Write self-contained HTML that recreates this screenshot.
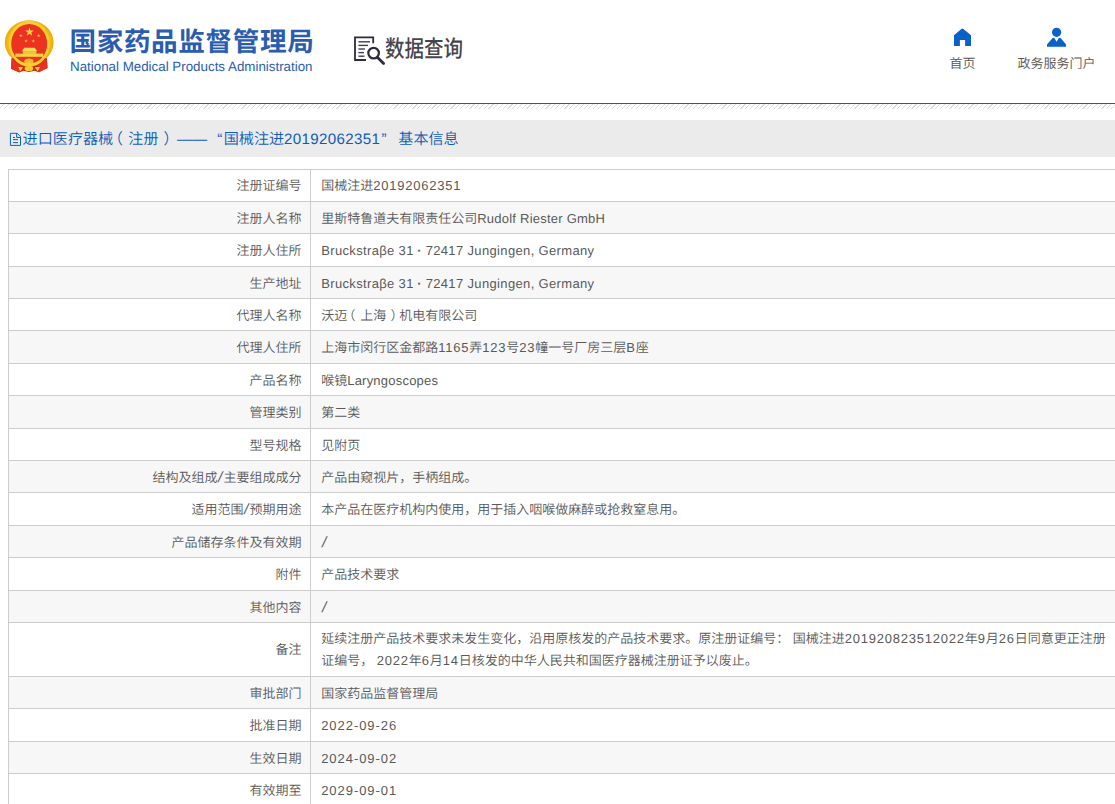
<!DOCTYPE html>
<html lang="zh-CN">
<head>
<meta charset="utf-8">
<title>国家药品监督管理局 数据查询</title>
<style>
*{box-sizing:border-box;margin:0;padding:0}
html,body{width:1115px;height:804px;overflow:hidden;background:#fff}
body{position:relative;font-family:"Liberation Sans","Noto Sans CJK SC",sans-serif;color:#595959;font-size:13px;text-rendering:geometricPrecision}
#hdr{position:absolute;left:0;top:0;width:1115px;height:103px;background:#fff}
#blue{position:absolute;left:0;top:103px;width:1115px;height:1px;background:#0a62c4}
#hatch{position:absolute;left:0;top:104px;width:1115px;height:5px;
 background:repeating-linear-gradient(135deg,#fff 0,#fff 2.5px,#dcdcdc 2.5px,#dcdcdc 3.36px)}
#emb{position:absolute;left:3px;top:18px;width:54px;height:58px}
#cn{position:absolute;left:69.4px;top:21.9px;font-size:26.6px;font-weight:700;color:#2a5db0;white-space:nowrap;line-height:40px;letter-spacing:.65px}
#en{position:absolute;left:70px;top:58.2px;font-size:13.35px;color:#2a5db0;white-space:nowrap;line-height:18px}
#sqi{position:absolute;left:352px;top:34px;width:36px;height:34px}
#sq{position:absolute;left:384.9px;top:34px;font-size:23.5px;font-weight:500;color:#46464e;white-space:nowrap;line-height:30px;transform:scaleX(.83);transform-origin:0 0}
.nav{position:absolute;top:53.5px;font-size:13px;color:#555;white-space:nowrap;line-height:20px;text-align:center;font-weight:350}
.ico{position:absolute}
#bar{position:absolute;left:0;top:120px;width:1115px;height:37px;background:#ebebeb}
#bar span{position:absolute;top:0;line-height:40px;font-size:15.1px;color:#0b5cb8;white-space:nowrap;font-weight:350}
#bari{position:absolute;left:9px;top:12px;width:14px;height:15px}
#tbl{position:absolute;left:8px;top:169px;width:1510px;height:700px;border-left:1px solid #ccc;border-top:1px solid #ccc}
.r{position:absolute;left:0;width:1510px;border-bottom:1px solid #ccc;background:#fff}
.r.g{background:#f7f7f7}
.l{position:absolute;left:0;top:0;bottom:0;width:302px;border-right:1px solid #ccc;text-align:right;padding-right:8.6px;line-height:34.4px;white-space:nowrap;font-weight:350}
.v{position:absolute;left:302px;top:0;bottom:0;padding-left:10.2px;line-height:34.4px;white-space:nowrap;font-weight:350}
.v.two{line-height:22px;padding-top:4.7px}
.pl,.pr{font-weight:inherit;position:relative}
.pl{left:-.36em}
.pr{left:.33em}
.dot{display:inline-block;width:3.96px;text-align:center;letter-spacing:0;font-weight:700;text-indent:-.4px}
.d{letter-spacing:.77px}
.s{display:inline-block;width:6px;text-align:center;font-size:14.8px;line-height:1;transform:skewX(-12deg)}
</style>
</head>
<body>
<div id="hdr">
  <svg id="emb" viewBox="0 0 54 58">
    <defs><radialGradient id="gg" cx="50%" cy="50%" r="50%"><stop offset="0.74" stop-color="#f8cf30"/><stop offset="0.88" stop-color="#f4b812"/><stop offset="1" stop-color="#eda808"/></radialGradient></defs>
<ellipse cx="26.20" cy="24.50" rx="24.4" ry="22.3" fill="url(#gg)"/>
<path d="M8.60 40.30 L8.00 50.80 L16.40 54.40 L20.50 52.80 L25.90 53.90 L31.50 52.80 L35.80 54.30 L44.50 50.00 L43.90 40.30 Z" fill="#db2213"/>
<path d="M8.60 40.30 L8.00 50.80 L16.40 54.40 L18.50 48.00 Z" fill="#e83020"/>
<path d="M43.90 40.30 L44.50 50.00 L35.80 54.30 L33.90 48.00 Z" fill="#e83020"/>
<ellipse cx="26.20" cy="25.80" rx="20.3" ry="23" fill="#f7d030"/>
<ellipse cx="26.20" cy="25.80" rx="18" ry="19.7" fill="#ec3322"/>
<ellipse cx="25.90" cy="43.30" rx="4.6" ry="2.8" fill="#f2bd2c"/>
<path d="M19.50 46.20 Q25.90 44.20 32.30 46.20 L25.90 48.60 Z" fill="#f7d030"/>
<ellipse cx="25.90" cy="50.40" rx="4.3" ry="2.6" fill="#f6cc26"/>
<path d="M15.20 48.90 L20.20 49.30 L17.20 53.20 Z" fill="#f7e03a"/>
<path d="M36.80 48.90 L31.80 49.30 L34.80 53.20 Z" fill="#f7e03a"/>
<polygon points="26.50,9.40 27.58,12.51 30.87,12.58 28.25,14.57 29.20,17.72 26.50,15.84 23.80,17.72 24.75,14.57 22.13,12.58 25.42,12.51" fill="#f7d640"/>
<polygon points="17.80,15.70 18.25,16.99 19.61,17.01 18.52,17.83 18.92,19.14 17.80,18.36 16.68,19.14 17.08,17.83 15.99,17.01 17.35,16.99" fill="#f0c238"/>
<polygon points="35.70,15.70 36.15,16.99 37.51,17.01 36.42,17.83 36.82,19.14 35.70,18.36 34.58,19.14 34.98,17.83 33.89,17.01 35.25,16.99" fill="#f0c238"/>
<polygon points="23.10,21.10 23.55,22.39 24.91,22.41 23.82,23.23 24.22,24.54 23.10,23.76 21.98,24.54 22.38,23.23 21.29,22.41 22.65,22.39" fill="#f0c238"/>
<polygon points="30.30,21.10 30.75,22.39 32.11,22.41 31.02,23.23 31.42,24.54 30.30,23.76 29.18,24.54 29.58,23.23 28.49,22.41 29.85,22.39" fill="#f0c238"/>
<path d="M21.20 29.70 L31.60 29.70 L34.30 33.20 L18.90 33.20 Z" fill="#f9d85a"/>
<rect x="19.90" y="33.20" width="13.4" height="2.6" fill="#f7c93c"/>
<rect x="12.40" y="35.60" width="27.9" height="3.2" fill="#f9d244"/>
  </svg>
  <div id="cn">国家药品监督管理局</div>
  <div id="en">National Medical Products Administration</div>
  <svg id="sqi" viewBox="0 0 36 34"><path d="M21.19999999999999 9.200000000000003 V3.299999999999997 H3 V26 H14" fill="none" stroke="#2b2b3d" stroke-width="1.8"/>
<path d="M6.399999999999977 7.799999999999997 H18" stroke="#2b2b3d" stroke-width="1.4" opacity=".9"/>
<path d="M6.399999999999977 11.399999999999999 H16" stroke="#2b2b3d" stroke-width="1.4" opacity=".9"/>
<path d="M6.399999999999977 15.0 H13" stroke="#2b2b3d" stroke-width="1.4" opacity=".9"/>
<path d="M6.399999999999977 18.6 H12" stroke="#2b2b3d" stroke-width="1.4" opacity=".9"/>
<path d="M6.399999999999977 22.200000000000003 H12.5" stroke="#2b2b3d" stroke-width="1.4" opacity=".9"/>
<circle cx="21.600000000000023" cy="19.1" r="5.3" fill="#fff" stroke="#2b2b3d" stroke-width="2.2"/>
<path d="M25.600000000000023 23.6 L31.600000000000023 29.6" stroke="#2b2b3d" stroke-width="2.8" stroke-linecap="round"/></svg>
  <div id="sq">数据查询</div>
  <svg class="ico" style="left:950px;top:26px;width:24px;height:22px" viewBox="0 0 24 22"><polygon fill="#0a62c8" points="4.00,9.20 11.70,2.80 13.10,2.80 21.00,9.20 21.00,19.90 15.10,19.90 15.10,13.90 9.90,13.90 9.90,19.90 4.00,19.90"/></svg>
  <svg class="ico" style="left:1044px;top:25px;width:24px;height:24px" viewBox="0 0 24 24"><circle cx="12.60" cy="7.35" r="4.6" fill="#0a62c8"/><polygon fill="#0a62c8" points="3.00,21.80 3.00,19.40 8.60,13.00 10.20,12.80 12.60,16.80 15.00,12.80 16.60,13.00 22.10,19.40 22.10,21.80"/></svg>
  <div class="nav" style="left:932.5px;width:60px">首页</div>
  <div class="nav" style="left:1006.5px;width:100px">政务服务门户</div>
</div>
<div id="blue"></div>
<div id="hatch"></div>
<div id="bar">
  <svg id="bari" viewBox="0 0 14 15"><path d="M8.2 1.3000000000000114 H1.4000000000000004 V13.400000000000006 H11.5 V4.599999999999994 Z" fill="none" stroke="#0a62c4" stroke-width="1"/><path d="M7.600000000000001 1.3000000000000114 V5.400000000000006 H11.5" fill="none" stroke="#0a62c4" stroke-width="1"/><path d="M4 5.5 H6 M4 7.599999999999994 H9 M4 10.599999999999994 H9" stroke="#0a62c4" stroke-width="1"/></svg>
  <span style="left:22.6px">进口医疗器械<b class="pl">（</b>注册<b class="pr">）</b></span>
  <span style="left:177px">——</span>
  <span style="left:217.3px">“</span>
  <span style="left:223.7px">国械注进<i style="font-style:normal;letter-spacing:.35px">20192062351</i><i style="font-style:normal;margin-left:1.2px">”</i></span>
  <span style="left:398.3px">基本信息</span>
</div>
<div id="tbl">
<div class="r" style="top:-0.60px;height:32.40px"><div class="l">注册证编号</div><div class="v">国械注进<span class="d">20192062351</span></div></div>
<div class="r g" style="top:31.80px;height:32.40px"><div class="l">注册人名称</div><div class="v">里斯特鲁道夫有限责任公司<span style="letter-spacing:0.234px">Rudolf Riester GmbH</span></div></div>
<div class="r" style="top:64.20px;height:32.40px"><div class="l">注册人住所</div><div class="v"><span style="letter-spacing:0.349px">Bruckstraβe 31 <b class="dot">·</b> 72417 Jungingen, Germany</span></div></div>
<div class="r g" style="top:96.60px;height:32.40px"><div class="l">生产地址</div><div class="v"><span style="letter-spacing:0.349px">Bruckstraβe 31 <b class="dot">·</b> 72417 Jungingen, Germany</span></div></div>
<div class="r" style="top:129.00px;height:32.40px"><div class="l">代理人名称</div><div class="v">沃迈<b class="pl">（</b>上海<b class="pr">）</b>机电有限公司</div></div>
<div class="r g" style="top:161.40px;height:32.40px"><div class="l">代理人住所</div><div class="v">上海市闵行区金都路<span class="d">1165</span>弄<span class="d">123</span>号<span class="d">23</span>幢一号厂房三层<span class="d">B</span>座</div></div>
<div class="r" style="top:193.80px;height:32.40px"><div class="l">产品名称</div><div class="v">喉镜<span style="letter-spacing:0.218px">Laryngoscopes</span></div></div>
<div class="r g" style="top:226.20px;height:32.40px"><div class="l">管理类别</div><div class="v">第二类</div></div>
<div class="r" style="top:258.60px;height:32.40px"><div class="l">型号规格</div><div class="v">见附页</div></div>
<div class="r g" style="top:291.00px;height:32.40px"><div class="l">结构及组成<span class="s">/</span>主要组成成分</div><div class="v">产品由窥视片，手柄组成。</div></div>
<div class="r" style="top:323.40px;height:32.40px"><div class="l">适用范围<span class="s">/</span>预期用途</div><div class="v">本产品在医疗机构内使用，用于插入咽喉做麻醉或抢救窒息用。</div></div>
<div class="r g" style="top:355.80px;height:32.40px"><div class="l">产品储存条件及有效期</div><div class="v"><span class="s">/</span></div></div>
<div class="r" style="top:388.20px;height:32.40px"><div class="l">附件</div><div class="v">产品技术要求</div></div>
<div class="r g" style="top:420.60px;height:32.40px"><div class="l">其他内容</div><div class="v"><span class="s">/</span></div></div>
<div class="r" style="top:453.00px;height:53.90px"><div class="l" style="line-height:53.90px">备注</div><div class="v two">延续注册产品技术要求未发生变化，沿用原核发的产品技术要求。原注册证编号： 国械注进<span class="d">201920823512022</span>年<span class="d">9</span>月<span class="d">26</span>日同意更正注册<br>证编号， <span class="d">2022</span>年<span class="d">6</span>月<span class="d">14</span>日核发的中华人民共和国医疗器械注册证予以废止。</div></div>
<div class="r g" style="top:506.90px;height:32.40px"><div class="l">审批部门</div><div class="v">国家药品监督管理局</div></div>
<div class="r" style="top:539.30px;height:32.40px"><div class="l">批准日期</div><div class="v"><span style="letter-spacing:.95px">2022-09-26</span></div></div>
<div class="r g" style="top:571.70px;height:32.40px"><div class="l">生效日期</div><div class="v"><span style="letter-spacing:.95px">2024-09-02</span></div></div>
<div class="r" style="top:604.10px;height:32.40px"><div class="l">有效期至</div><div class="v"><span style="letter-spacing:.95px">2029-09-01</span></div></div>
<div style="position:absolute;left:0;top:-1px;width:1510px;height:1px;background:#ccc"></div>
</div>
</body>
</html>
